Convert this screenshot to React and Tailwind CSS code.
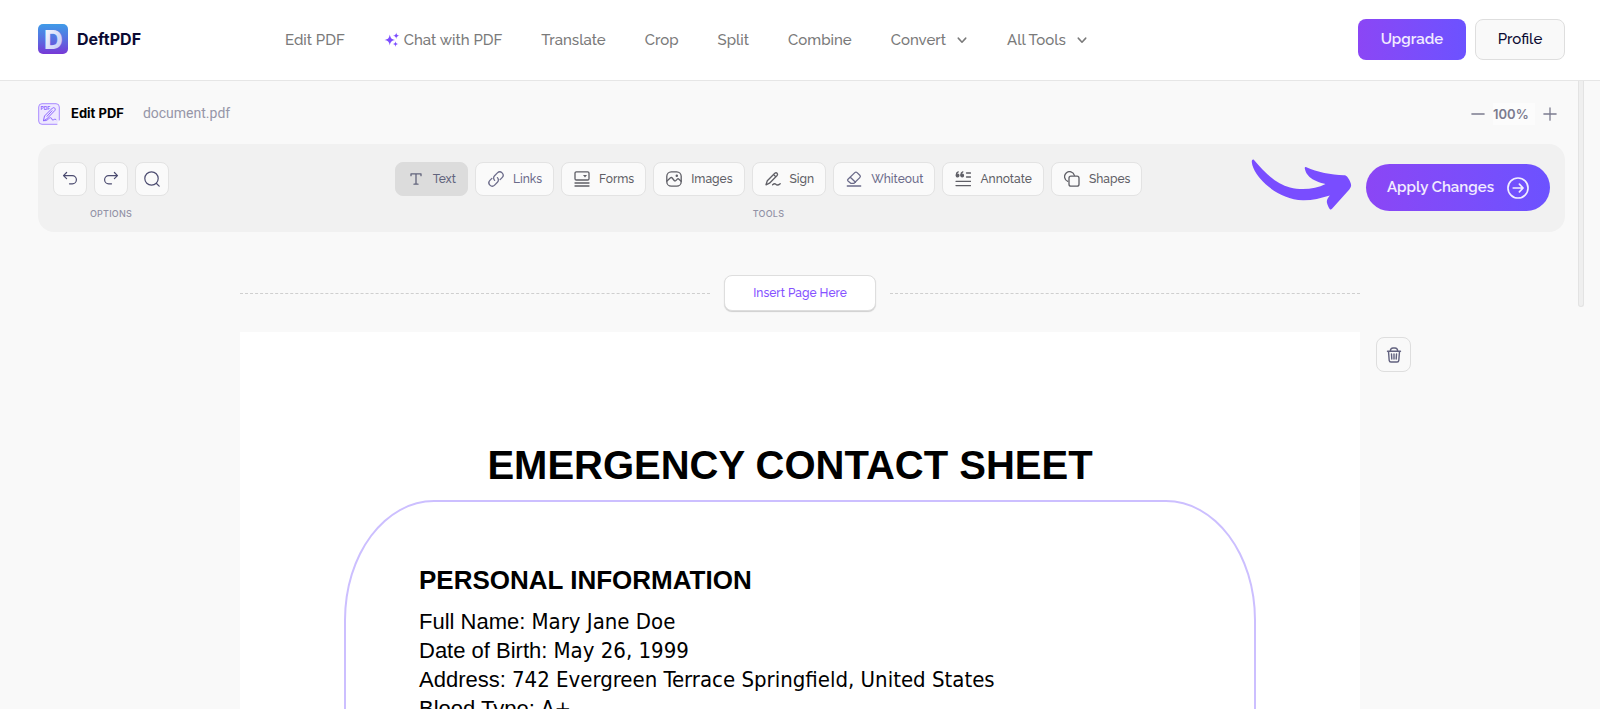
import React, { useState } from 'react';

const PlainIcon = ({ children, className = 'size-4', strokeWidth = 1.3 }) => (
    <svg
        className={`shrink-0 ${className}`}
        viewBox="0 0 16 16"
        fill="none"
        stroke="currentColor"
        strokeWidth={strokeWidth}
        strokeLinecap="round"
        strokeLinejoin="round"
        aria-hidden="true"
    >
        {children}
    </svg>
);

const Chevron = () => (
    <PlainIcon className="size-3" strokeWidth={2}>
        <path d="M3 5.5 8 11l5-5.5" />
    </PlainIcon>
);

const Sparkles = () => (
    <svg className="size-4 shrink-0" viewBox="0 0 16 16" fill="#7c4dff" aria-hidden="true">
        <path d="M5.800 2.600c.7 3.800 1.900 4.800 5.300 5.400-3.400.6-4.600 1.600-5.300 5.400C5.100 9.600 3.900 8.600.5 8c3.400-.6 4.600-1.600 5.300-5.400z" />
        <path d="M12.200.5c.3 2.200 1 2.900 3.300 3.200-2.300.3-3 1-3.300 3.200-.3-2.200-1-2.900-3.300-3.200 2.300-.3 3-1 3.300-3.200z" />
        <path d="M11.500 9.300c.3 2 .9 2.500 2.900 2.800-2 .3-2.600.8-2.900 2.800-.3-2-.9-2.500-2.900-2.800 2-.3 2.600-.8 2.900-2.800z" />
    </svg>
);

const Logo = () => (
    <svg className="size-[30px] shrink-0" viewBox="0 0 30 30" aria-hidden="true">
        <defs>
            <linearGradient id="logoBg" x1="0" y1="0" x2="0" y2="1">
                <stop offset="0" stopColor="#3f9be8" />
                <stop offset="0.55" stopColor="#5b6be0" />
                <stop offset="1" stopColor="#7738d6" />
            </linearGradient>
            <linearGradient id="logoD" x1="0" y1="0" x2="1" y2="1">
                <stop offset="0" stopColor="#ffffff" />
                <stop offset="1" stopColor="#b9c2f4" />
            </linearGradient>
        </defs>
        <rect width="30" height="30" rx="5" fill="url(#logoBg)" />
        <text x="15.500" y="24.500" textAnchor="middle" fontFamily="Inter" fontWeight="800" fontSize="26" fill="url(#logoD)">D</text>
    </svg>
);

const EditPdfIcon = () => (
    <svg className="size-[22px] shrink-0" viewBox="0 0 22 22" fill="none" stroke="#a98bff" aria-hidden="true">
        <path d="M19 21.300H4A3.300 3.300 0 0 1 .7 18V4A3.300 3.300 0 0 1 4 .7h14A3.300 3.300 0 0 1 21.300 4v13" fill="#eee8ff" strokeLinecap="round" />
        <text x="2.500" y="6.500" fontFamily="Inter" fontWeight="700" fontSize="5" fill="#8d66ff" stroke="none">PDF</text>
        <path d="m5.500 17.500 1-4.500 8-8c1.600-1.200 3.600.8 2.400 2.400l-7.900 8.300zM5.500 17.500c4 1.200 5-2.700 7-2.800 1.700-.1.800 2.400 2.400 2.300 1.300-.1 1.500-1.600 3.100-.4M9 13.300l5-5.500" stroke="#8d66ff" strokeLinejoin="round" strokeLinecap="round" />
    </svg>
);

const tools = [
    {
        name: 'Text',
        color: 'text-[#62647c]',
        icon: <path d="M3 4.700V2.800h10v1.900M8 2.800v10.400M6 13.200h4" />,
    },
    {
        name: 'Links',
        color: 'text-[#6b6b8a]',
        icon: (
            <>
                <path d="M6.600 9.400a3.300 3.300 0 0 1 0-4.700l2.800-2.800a3.300 3.300 0 0 1 4.700 4.700l-2 2" />
                <path d="M9.400 6.600a3.300 3.300 0 0 1 0 4.700l-2.800 2.800a3.300 3.300 0 0 1-4.700-4.700l2-2" />
            </>
        ),
    },
    {
        name: 'Forms',
        color: 'text-[#5f5f66]',
        icon: (
            <>
                <rect x="1" y=".8" width="14" height="8.200" rx="1.300" />
                <path d="M9 4h4l-2 2.400z" fill="currentColor" stroke="none" />
                <path d="M1 12h14M1 15h14" />
            </>
        ),
    },
    {
        name: 'Images',
        color: 'text-[#5f5f66]',
        icon: (
            <>
                <rect x=".8" y=".8" width="14.400" height="14.400" rx="4.500" />
                <path d="m1 10 3.500-3.200c.6-.5 1.200-.4 1.700.2l2 2.500c.5.600 1.100.6 1.600.1l1.500-1.500c.6-.5 1.200-.4 1.700.1l2.100 2" />
                <circle cx="10.800" cy="4.800" r=".6" />
            </>
        ),
    },
    {
        name: 'Sign',
        color: 'text-[#5f5f66]',
        icon: (
            <>
                <path d="m1 13.800 1.300-4L9.800 2.200c1.700-1.300 3.600.6 2.300 2.300l-7.600 7.700zM8.600 3.600l2.200 2.200" />
                <path d="M7.600 13.800c1.300-1.200 2.300-1.400 3.200-.5 1 1 2.300 1.200 4.400-.6" />
            </>
        ),
    },
    {
        name: 'Whiteout',
        color: 'text-[#6b6b8a]',
        icon: (
            <path d="M2 8.200 8.800 1.600c.7-.7 1.600-.7 2.300 0l2.700 2.700c.7.7.7 1.600 0 2.300L8 12.300H4.700L2 10c-.6-.6-.6-1.200 0-1.800zM4.300 6.200l5.200 5M1.300 15h13.400" />
        ),
    },
    {
        name: 'Annotate',
        color: 'text-[#5f5f66]',
        icon: (
            <>
                <circle cx="2.600" cy="4.500" r="1.300" fill="currentColor" />
                <circle cx="7.200" cy="4.500" r="1.300" fill="currentColor" />
                <path d="M1.300 4c0-1.700.7-2.800 1.900-3.200M5.900 4c0-1.700.7-2.800 1.900-3.200M11.500 2h4M11.500 6h4M1 10.300h14.500M1 14.600h14.500" />
            </>
        ),
    },
    {
        name: 'Shapes',
        color: 'text-[#5f5f66]',
        icon: (
            <>
                <path d="M3.800 10.300A5 5 0 1 1 10.400 4.300" />
                <rect x="5" y="5.200" width="10" height="10" rx="2" />
            </>
        ),
    },
];

const options = [
    { name: 'Undo', icon: <path d="M4.600 1.500 1.500 4.600l3.100 3.100M1.500 4.600h8.800a4 4 0 0 1 0 8.200H7.500" /> },
    { name: 'Redo', icon: <path d="m11.400 1.500 3.100 3.100-3.100 3.100M14.500 4.600H5.700a4 4 0 0 0 0 8.200h2.800" /> },
    {
        name: 'Search',
        icon: (
            <>
                <circle cx="7.500" cy="7.500" r="6.700" />
                <path d="m12.500 12.500 2.700 2.700" />
            </>
        ),
    },
];

const navLinks = [
    { name: 'Edit PDF' },
    { name: 'Chat with PDF', sparkles: true },
    { name: 'Translate' },
    { name: 'Crop' },
    { name: 'Split' },
    { name: 'Combine' },
    { name: 'Convert', menu: true },
    { name: 'All Tools', menu: true },
];

const details = [
    ['Full Name:', 'Mary Jane Doe'],
    ['Date of Birth:', 'May 26, 1999'],
    ['Address:', '742 Evergreen Terrace Springfield, United States'],
    ['Blood Type:', 'A+'],
];

const Header = () => (
    <header className="flex h-[81px] shrink-0 items-center border-b border-[#e6e6e6] bg-white pr-[35px] pl-[38px] pb-0.5">
        <a href="#home" className="flex w-[247px] items-center gap-[9px] font-['Inter',sans-serif] text-base font-bold text-[#0b0a33]">
            <Logo />
            DeftPDF
        </a>
        <nav className="flex items-center gap-[39px] pt-0.5 text-[15px] font-medium text-[#7a7a7a]">
            {navLinks.map((link) =>
                link.menu ? (
                    <button key={link.name} type="button" className="flex items-center gap-2.5">
                        {link.name}
                        <Chevron />
                    </button>
                ) : (
                    <a key={link.name} href="#tool" className="flex items-center gap-1">
                        {link.sparkles && <Sparkles />}
                        {link.name}
                    </a>
                )
            )}
        </nav>
        <div className="ml-auto flex gap-[9px]">
            <button type="button" className="h-[41px] w-[108px] rounded-lg bg-linear-to-r from-[#8b46f5] to-[#6c52ff] text-[15px] font-semibold text-white/90">
                Upgrade
            </button>
            <button type="button" className="h-[41px] w-[90px] rounded-lg border border-[#dedede] bg-[#f9f9f9] text-[15px] font-medium text-[#0b0a33]">
                Profile
            </button>
        </div>
    </header>
);

const FileBar = ({ zoom, setZoom }) => (
    <div className="flex h-[63px] items-center pr-[43px] pl-[38px] pt-0.5 font-['Inter',sans-serif]">
        <EditPdfIcon />
        <h1 className="ml-[11px] text-[13px] font-bold text-black">Edit PDF</h1>
        <span className="ml-[19px] font-['Roboto',sans-serif] text-[14px] text-[#9696a8]">document.pdf</span>
        <div className="ml-auto flex items-center text-[#7b7b8f]">
            <button type="button" aria-label="Zoom out" onClick={() => setZoom(zoom - 10)}>
                <PlainIcon className="size-[14px]" strokeWidth={1.5}>
                    <path d="M1 8h14" />
                </PlainIcon>
            </button>
            <input
                aria-label="Zoom level"
                className="mx-2 h-[22px] w-[42px] bg-[#fcfcfc] text-[13px] font-semibold"
                value={`${zoom}%`}
                onChange={(e) => setZoom(parseInt(e.target.value, 10) || 0)}
            />
            <button type="button" aria-label="Zoom in" onClick={() => setZoom(zoom + 10)}>
                <PlainIcon className="size-[14px]" strokeWidth={1.5}>
                    <path d="M1 8h14M8 1v14" />
                </PlainIcon>
            </button>
        </div>
    </div>
);

const Toolbar = () => {
    const [active, setActive] = useState('Text');

    return (
        <div className="mr-[35px] ml-[38px] flex h-[88px] items-start justify-between rounded-2xl bg-[#f1f1f1] px-[15px] pt-[18px]">
            <div className="flex flex-1 items-start">
                <div className="flex flex-col items-center gap-3">
                    <div className="flex gap-[7px]">
                        {options.map((option) => (
                            <button
                                key={option.name}
                                type="button"
                                aria-label={option.name}
                                className="flex h-[34px] w-[34px] items-center justify-center rounded-lg border border-[#e3e3e3] bg-[#fafafa] text-[#4c4c70]"
                            >
                                <PlainIcon strokeWidth={1.2}>{option.icon}</PlainIcon>
                            </button>
                        ))}
                    </div>
                    <span className="font-['Inter',sans-serif] text-[9px] leading-3 font-medium tracking-wide text-[#9292a6]">OPTIONS</span>
                </div>
            </div>
            <div className="mr-[66px] flex flex-col items-center gap-3">
                <div className="flex gap-[7px] text-xs font-medium">
                    {tools.map((tool) => (
                        <button
                            key={tool.name}
                            type="button"
                            onClick={() => setActive(tool.name)}
                            className={`flex h-[34px] items-center gap-[9px] rounded-lg border pr-[11px] pl-3 ${tool.color} ${active === tool.name ? 'border-[#dcdcdc] bg-[#dcdcdc]' : 'border-[#e3e3e3] bg-[#fafafa]'}`}
                        >
                            <PlainIcon>{tool.icon}</PlainIcon>
                            {tool.name}
                        </button>
                    ))}
                </div>
                <span className="font-['Inter',sans-serif] text-[9px] leading-3 font-medium tracking-wide text-[#9292a6]">TOOLS</span>
            </div>
            <div className="flex flex-1 justify-end gap-[14px]">
                <svg className="-mt-1 h-[54px] w-[101px] shrink-0" viewBox="0 0 101 54" fill="#794dff" aria-hidden="true">
                    <path d="M.8 4C.6 2 2 .8 3 2c10 12 22 24 36 27.500 12 3 26 1.500 35.500-3.500-5-1-13-4-16-7-2.500-2.500-4-5-4.700-8.500-.3-1.200.5-1.700 1.600-1.200C66 14 80 17 93 17.300c1.500 0 2.500.6 3.400 1.800 1.400 2 2.700 4 3.400 6.300.7 2.300.2 4.200-1.500 6L81 50.800c-.9 1-1.700 1-2.300.1-1.200-1.600-2-3.500-2.700-6-.7-2.700.9-5 2.800-7.400-9 2.700-18 5-27 4.800C29 41.500 8 24 2.300 9.800 1.500 8 1 6 .8 4z" />
                </svg>
                <button
                    type="button"
                    className="mt-0.5 flex h-[47px] w-[184px] shrink-0 items-center justify-center gap-[13px] rounded-full bg-linear-to-r from-[#8b46f5] to-[#6c52ff] text-[15px] font-semibold text-white/90"
                >
                    Apply Changes
                    <PlainIcon className="size-[22px]" strokeWidth={1.2}>
                        <circle cx="8" cy="8" r="7.300" />
                        <path d="M4.500 8h7M9 5.200 11.700 8 9 10.800" />
                    </PlainIcon>
                </button>
            </div>
        </div>
    );
};

const Dashes = () => <div className="flex-1 border-t border-dashed border-[#cfcfcf]" />;

const DocumentPage = () => (
    <article className="h-[900px] bg-white px-[104px] pt-[110px] font-['Liberation_Sans',Arial,sans-serif] text-black">
        <h2 className="pr-5 text-center text-[40px] leading-[46px] font-bold whitespace-nowrap">EMERGENCY CONTACT SHEET</h2>
        <section className="mt-3 h-[700px] rounded-t-[90px_120px] border-2 border-[#ccbfff] px-[73px] pt-[63px]">
            <h3 className="text-[26px] leading-[30px] font-bold">PERSONAL INFORMATION</h3>
            <div className="mt-3 text-[22px] leading-[29px]">
                {details.map(([label, value]) => (
                    <p key={label}>
                        {label} <span className="font-['DejaVu_Sans_Condensed','DejaVu_Sans',sans-serif] leading-none">{value}</span>
                    </p>
                ))}
            </div>
        </section>
    </article>
);

const App = () => {
    const [zoom, setZoom] = useState(100);

    return (
        <div className="flex h-screen flex-col overflow-hidden bg-[#f9f9f9] font-['Raleway','Lato',sans-serif]">
            <Header />
            <main className="relative min-h-0 flex-1 overflow-hidden">
                <FileBar zoom={zoom} setZoom={setZoom} />
                <Toolbar />
                <div className="mx-auto mt-[43px] w-[70%]">
                    <div className="flex items-center gap-[14px]">
                        <Dashes />
                        <button
                            type="button"
                            className="h-9 w-[152px] rounded-lg border border-[#dedede] bg-white text-xs font-medium text-[#8552ff] shadow-[0_1px_1px_#cfcfcf]"
                        >
                            Insert Page Here
                        </button>
                        <Dashes />
                    </div>
                    <div className="relative mt-[21px]">
                        <DocumentPage />
                        <button
                            type="button"
                            aria-label="Delete page"
                            className="absolute top-[5px] left-full ml-4 flex size-[35px] items-center justify-center rounded-lg border border-[#dedede] text-[#62627f]"
                        >
                            <PlainIcon strokeWidth={1.4}>
                                <path d="M1.500 4.200h13M4.300 4C4.500 1.800 5.500 1 7 1h2c1.500 0 2.500.8 2.700 3M2.500 4.400l.7 9c.1 1 .6 1.600 1.700 1.600h6.200c1.100 0 1.600-.6 1.700-1.600l.7-9M5.500 7l.3 5M8 7v5M10.500 7l-.3 5" />
                            </PlainIcon>
                        </button>
                    </div>
                </div>
                <div className="absolute top-0 right-4 h-[226px] w-[6px] rounded-b border border-t-0 border-[#e3e3e3] bg-[#efefef]" />
            </main>
        </div>
    );
};

export default App;
